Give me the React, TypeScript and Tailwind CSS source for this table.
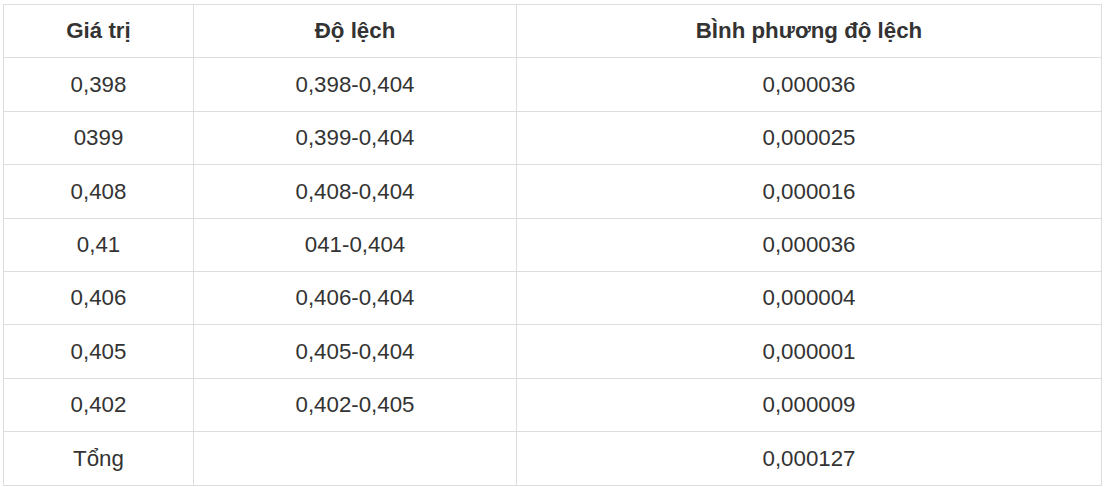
const rows = [
  ['0,398', '0,398-0,404', '0,000036'],
  ['0399', '0,399-0,404', '0,000025'],
  ['0,408', '0,408-0,404', '0,000016'],
  ['0,41', '041-0,404', '0,000036'],
  ['0,406', '0,406-0,404', '0,000004'],
  ['0,405', '0,405-0,404', '0,000001'],
  ['0,402', '0,402-0,405', '0,000009'],
  ['Tổng', '', '0,000127'],
]

export default function App() {
  return (
    <div className="bg-white pl-[3px] pt-[4px] w-[1105px] h-[487px] overflow-hidden font-['Liberation_Sans',Arial,sans-serif] text-[22.3px] text-[#333]">
      <table className="w-[1099px] border-collapse table-fixed">
        <colgroup>
          <col className="w-[190px]" />
          <col className="w-[323px]" />
          <col />
        </colgroup>
        <thead>
          <tr className="h-[53.4px]">
            <th className="border border-[#ddd] font-bold text-center">Giá trị</th>
            <th className="border border-[#ddd] font-bold text-center">Độ lệch</th>
            <th className="border border-[#ddd] font-bold text-center">BÌnh phương độ lệch</th>
          </tr>
        </thead>
        <tbody>
          {rows.map((r, i) => (
            <tr key={i} className="h-[53.4px]">
              {r.map((c, j) => (
                <td key={j} className="border border-[#ddd] text-center">
                  {c}
                </td>
              ))}
            </tr>
          ))}
        </tbody>
      </table>
    </div>
  )
}
